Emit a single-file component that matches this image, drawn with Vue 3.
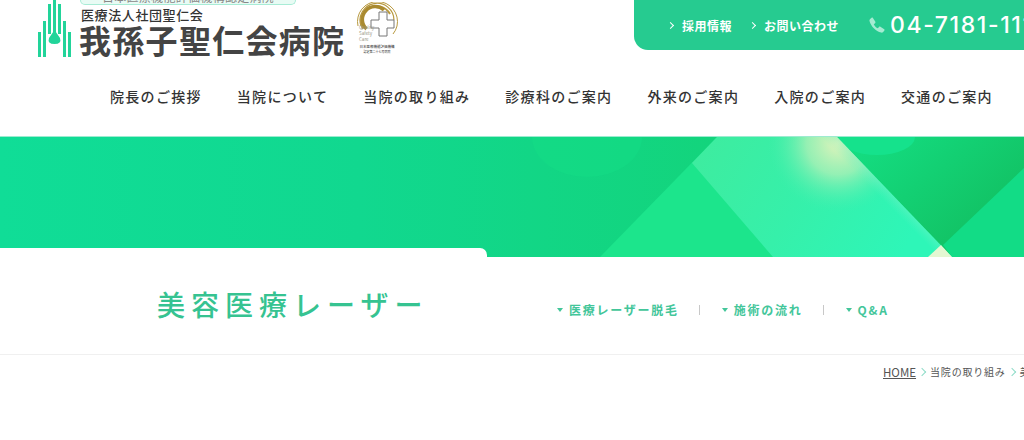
<template>
  <div class="page">
    <header class="site-header">
      <div class="top">
        <div class="logo">
          <svg class="mark" width="33" height="58" viewBox="0 0 33 58">
            <g fill="#22d49a">
              <rect x="0" y="32" width="3" height="25" />
              <rect x="5" y="21" width="3" height="36" />
              <rect x="10" y="4" width="3" height="30" />
              <rect x="15" y="0" width="3" height="33" />
              <rect x="20" y="4" width="3" height="30" />
              <rect x="25" y="21" width="3" height="36" />
              <rect x="30" y="32" width="3" height="25" />
              <path d="M16.500 30 L22 38 Q24 44 16.500 44 Q9 44 11 38 Z" />
            </g>
          </svg>
          <div class="logo-text">
            <div class="pill"><span>日本医療機能評価機構認定病院</span></div>
            <div class="corp">医療法人社団聖仁会</div>
            <div class="name">我孫子聖仁会病院</div>
          </div>
          <svg class="badge" width="42" height="54" viewBox="0 0 42 54">
            <g fill="none" stroke="#b8993f">
              <path d="M1 24 A20 20 0 1 1 40 24" stroke-width="1" />
              <path d="M4 24 A17 17 0 1 1 37 18" stroke-width="1.200" />
              <path d="M6 27 A15 15 0 0 1 33 12" stroke-width="2" />
              <path d="M9.500 27 A11.500 11.500 0 0 1 27 8" stroke-width="3.500" stroke="#a98a30" />
              <path d="M40 24 A20 20 0 0 1 36 32" stroke-width="1" />
            </g>
            <path d="M22 10 H30 V18 H37 V26 H30 V34 H22 V26 H14 V18 H22 Z" fill="#fff" stroke="#777" stroke-width="1" />
            <text x="2" y="27" class="badge-text mini">Quality</text>
            <text x="2" y="33" class="badge-text mini">Safety</text>
            <text x="2" y="39" class="badge-text mini">Care</text>
            <text x="20" y="46" class="badge-text" text-anchor="middle">日本医療機能評価機構</text>
            <text x="20" y="51" class="badge-text small" text-anchor="middle">認定第二十七号病院</text>
          </svg>
        </div>
        <div class="contact">
          <a class="contact-link"><i class="chev"></i>採用情報</a>
          <a class="contact-link"><i class="chev"></i>お問い合わせ</a>
          <div class="tel">
            <svg width="18" height="18" viewBox="0 0 24 24">
              <path fill="#a5ebd2" d="M6.600 2.500 L9.800 7.600 C10.200 8.300 10 9 9.400 9.500 L7.700 10.900 C8.800 13.300 10.800 15.300 13.200 16.400 L14.600 14.700 C15.100 14.100 15.800 13.900 16.500 14.300 L21.600 17.500 C22.200 17.900 22.300 18.700 21.900 19.300 L20.200 21.300 C19.500 22.100 18.500 22.400 17.500 22.100 C10.500 20.300 3.800 13.600 2 6.600 C1.700 5.600 2 4.600 2.800 3.900 L4.800 2.200 C5.400 1.800 6.200 1.900 6.600 2.500 Z" />
            </svg>
            <span>04-7181-1118</span>
          </div>
        </div>
      </div>
      <nav class="gnav">
        <a v-for="item in navItems" :key="item">{{ item }}</a>
      </nav>
    </header>

    <section class="hero">
      <svg class="hero-art" width="1024" height="120" viewBox="0 0 1024 120">
        <defs>
          <linearGradient id="band" gradientUnits="userSpaceOnUse" x1="700" y1="0" x2="900" y2="120">
            <stop offset="0" stop-color="#3eec9f" />
            <stop offset="0.500" stop-color="#36f0aa" />
            <stop offset="1" stop-color="#2ef6b8" />
          </linearGradient>
          <radialGradient id="cream" gradientUnits="userSpaceOnUse" cx="838" cy="6" r="70">
            <stop offset="0" stop-color="#e2f3bb" />
            <stop offset="0.450" stop-color="#bdf0b8" stop-opacity="0.700" />
            <stop offset="1" stop-color="#45eeb0" stop-opacity="0" />
          </radialGradient>
          <linearGradient id="edge" gradientUnits="userSpaceOnUse" x1="860" y1="40" x2="880" y2="20">
            <stop offset="0" stop-color="#6ff2c4" stop-opacity="0" />
            <stop offset="1" stop-color="#9df0c4" />
          </linearGradient>
          <linearGradient id="side" gradientUnits="userSpaceOnUse" x1="860" y1="0" x2="960" y2="110">
            <stop offset="0" stop-color="#14de82" />
            <stop offset="1" stop-color="#12c264" />
          </linearGradient>
        </defs>
        <ellipse cx="587" cy="0" rx="55" ry="40" fill="#14de86" opacity="0.500" />
        <path d="M837 0 H1024 V120 H952 Z" fill="url(#side)" />
        <ellipse cx="877" cy="0" rx="38" ry="18" fill="#15e28c" />
        <path d="M1024 31 V120 H952 L943 108 Z" fill="#12dc86" />
        <path d="M717 0 H837 L952 120 H600 Z" fill="#1ce58c" />
        <path d="M717 0 H837 L952 120 H773 L692 26 Z" fill="url(#band)" />
        <path d="M717 0 H837 L952 120 H773 L692 26 Z" fill="url(#cream)" />
        <path d="M837 0 L952 120 H932 L818 0 Z" fill="url(#edge)" />
        <path d="M941 108 L952 120 H928 Z" fill="#e4f7d2" />
      </svg>
      <div class="hero-tab"></div>
    </section>

    <section class="page-title">
      <h1>美容医療レーザー</h1>
      <ul class="subnav">
        <li v-for="item in subItems" :key="item">{{ item }}</li>
      </ul>
    </section>

    <div class="breadcrumb">
      <a class="home">HOME</a>
      <span class="crumb">当院の取り組み</span>
      <span class="crumb">美容医療レーザー</span>
    </div>
  </div>
</template>

<script setup>
const navItems = [
  '院長のご挨拶',
  '当院について',
  '当院の取り組み',
  '診療科のご案内',
  '外来のご案内',
  '入院のご案内',
  '交通のご案内'
]

const subItems = ['医療レーザー脱毛', '施術の流れ', 'Q&A']
</script>

<style>
html,
body {
  margin: 0;
  background: #fff;
}
</style>

<style scoped>
.page {
  width: 1024px;
  height: 440px;
  overflow: hidden;
  background: #fff;
  font-family: "Noto Sans CJK JP", "Noto Sans", sans-serif;
  color: #333;
}
.site-header {
  height: 137px;
}
.top {
  display: flex;
  height: 58px;
}
.logo {
  display: flex;
  width: 596px;
  flex: none;
  padding-left: 38px;
  box-sizing: border-box;
}
.mark {
  flex: none;
}
.logo-text {
  margin-left: 9px;
  width: 268px;
}
.pill {
  width: 216px;
  height: 5px;
  box-sizing: border-box;
  overflow: hidden;
  display: flex;
  align-items: flex-end;
  justify-content: center;
  background: #e8fbf4;
  border: 1px solid #a8ecd6;
  border-top: 0;
  border-radius: 0 0 6px 6px;
}
.pill span {
  font-size: 12px;
  line-height: 12px;
  margin-bottom: 1px;
  letter-spacing: 0.300px;
  white-space: nowrap;
  color: #888;
}
.corp {
  margin-top: 2px;
  padding-left: 1px;
  font-size: 13px;
  line-height: 15px;
  font-weight: 500;
  letter-spacing: 0.600px;
  white-space: nowrap;
}
.name {
  margin-top: 1px;
  margin-left: -1px;
  font-size: 32px;
  line-height: 33px;
  font-weight: 700;
  letter-spacing: 1.300px;
  color: #444;
  white-space: nowrap;
}
.badge {
  flex: none;
  margin-left: 9px;
  margin-top: 2px;
}
.badge-text {
  font-size: 3.500px;
  fill: #333;
}
.badge-text.small {
  font-size: 3px;
}
.badge-text.mini {
  font-size: 4.500px;
  fill: #998;
}
.contact {
  flex: none;
  width: 428px;
  height: 50px;
  margin-left: 38px;
  padding-left: 34px;
  box-sizing: border-box;
  display: flex;
  align-items: center;
  background: #26cb90;
  border-radius: 0 0 0 14px;
  color: #fff;
  white-space: nowrap;
}
.contact-link {
  display: flex;
  align-items: center;
  margin-right: 18px;
  font-size: 12px;
  font-weight: 700;
  letter-spacing: 0.500px;
}
.chev {
  width: 4px;
  height: 4px;
  margin-right: 9px;
  border-top: 1.500px solid #fff;
  border-right: 1.500px solid #fff;
  transform: rotate(45deg);
}
.tel {
  display: flex;
  align-items: center;
  margin-left: 11px;
  font-family: Inter, "Noto Sans", sans-serif;
  font-size: 23px;
  font-weight: 500;
  letter-spacing: 1.600px;
}
.tel svg {
  margin-right: 4px;
}
.gnav {
  display: flex;
  gap: 35px;
  padding-left: 110px;
  margin-top: 26px;
  font-size: 14px;
  line-height: 24px;
  font-weight: 500;
  letter-spacing: 1.300px;
  white-space: nowrap;
}
.hero {
  position: relative;
  height: 120px;
  background: linear-gradient(90deg, #10dd97 0%, #11d88f 35%, #13d47c 70%);
  box-shadow: 0 -1px 0 #9debd0;
}
.hero-art {
  position: absolute;
  inset: 0;
  display: block;
}
.hero-tab {
  position: absolute;
  left: 0;
  bottom: 0;
  width: 487px;
  height: 9px;
  background: #fff;
  border-radius: 0 7px 0 0;
}
.page-title {
  display: flex;
  align-items: center;
  height: 98px;
  padding-left: 157px;
  box-sizing: border-box;
  border-bottom: 1px solid #f0f0f0;
}
h1 {
  margin: 0 0 4px;
  width: 400px;
  flex: none;
  font-size: 28px;
  line-height: 40px;
  font-weight: 500;
  letter-spacing: 6px;
  color: #36c391;
  white-space: nowrap;
}
.subnav {
  display: flex;
  align-items: center;
  list-style: none;
  margin: 8px 0 0;
  padding: 0;
  font-size: 12px;
  line-height: 16px;
  font-weight: 700;
  letter-spacing: 1.750px;
  color: #43c69a;
  white-space: nowrap;
}
.subnav li {
  position: relative;
  display: flex;
  align-items: center;
}
.subnav li::before {
  content: "";
  margin-right: 6px;
  border-top: 4px solid #43c69a;
  border-left: 3.500px solid transparent;
  border-right: 3.500px solid transparent;
}
.subnav li + li {
  margin-left: 43px;
}
.subnav li + li::after {
  content: "";
  position: absolute;
  left: -23px;
  top: 3px;
  width: 1px;
  height: 10px;
  background: #c8c8c8;
}
.breadcrumb {
  display: flex;
  padding-left: 883px;
  margin-top: 9px;
  font-size: 10px;
  line-height: 16px;
  letter-spacing: 0.800px;
  color: #555;
  white-space: nowrap;
}
.home {
  font-size: 11.500px;
  letter-spacing: 0;
  text-decoration: underline;
}
.crumb {
  position: relative;
  margin-left: 14px;
}
.crumb::before {
  content: "";
  position: absolute;
  left: -11px;
  top: 5px;
  width: 5px;
  height: 5px;
  border-top: 1px solid #8fdcc8;
  border-right: 1px solid #8fdcc8;
  transform: rotate(45deg);
}
</style>
